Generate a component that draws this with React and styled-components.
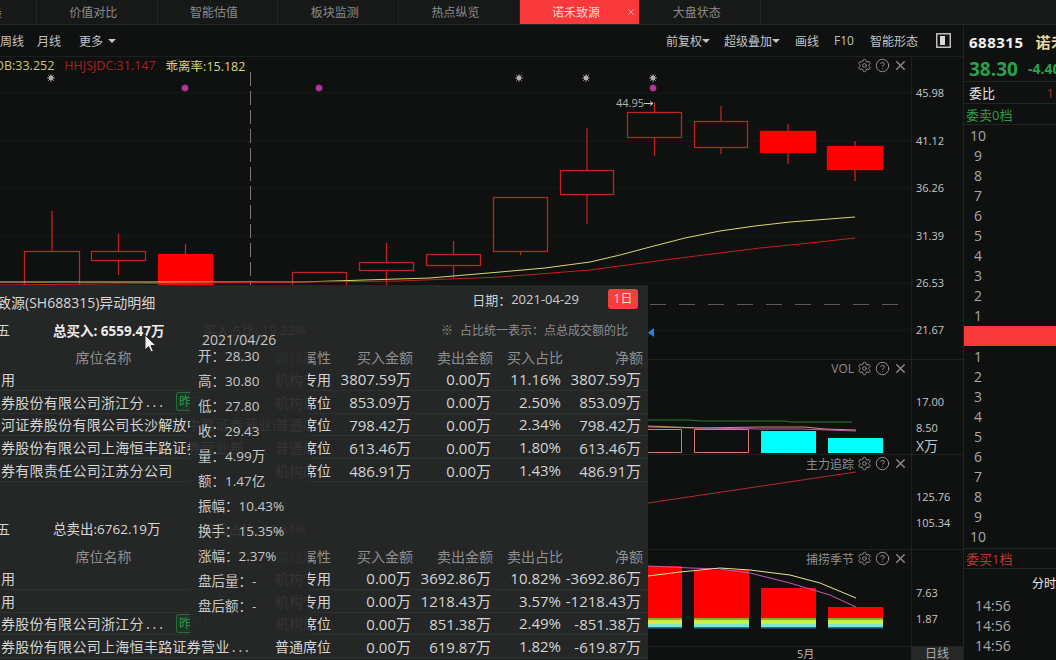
import React from 'react';
import styled, { createGlobalStyle } from 'styled-components';
import { Settings, CircleHelp, X } from 'lucide-react';

const GlobalStyle = createGlobalStyle`
  html, body { margin: 0; padding: 0; background: #0f1010; overflow: hidden; }
  body { font-family: "Open Sans", "Noto Sans CJK SC", sans-serif; }
`;

const Page = styled.div`
  position: relative;
  width: 1056px;
  height: 660px;
  overflow: hidden;
  background: #0f1010;
  display: flex;
  flex-direction: column;
  color: #bdbdbd;
`;

const TabBar = styled.div`
  height: 24px;
  flex: none;
  display: flex;
  background: #171818;
  border-bottom: 1px solid #232525;
`;

const Tab = styled.div`
  flex: none;
  width: ${p => p.$width || 120.7}px;
  box-sizing: border-box;
  display: flex;
  align-items: center;
  justify-content: ${p => (p.$edge ? 'flex-end' : 'center')};
  padding-right: ${p => (p.$edge ? 34 : 7)}px;
  position: relative;
  font-size: 12px;
  color: ${p => (p.$active ? '#f5d6d0' : '#8b8b8b')};
  background: ${p => (p.$active ? '#f7393b' : 'transparent')};
  border-right: 1px solid #232525;
  white-space: nowrap;
`;

const TabClose = styled(X)`
  position: absolute;
  right: 3px;
  top: 7px;
  width: 10px;
  height: 10px;
  color: #f5c0bb;
`;

const Body = styled.div`
  flex: 1;
  display: flex;
  min-height: 0;
`;

const Main = styled.div`
  width: 963px;
  flex: none;
  display: flex;
  flex-direction: column;
`;

const Toolbar = styled.div`
  height: 31px;
  flex: none;
  display: flex;
  align-items: center;
  justify-content: space-between;
  padding-right: 12px;
  border-bottom: 1px solid #1d1f1f;
  font-size: 12px;
`;

const ToolGroup = styled.div`
  display: flex;
  align-items: center;
`;

const ToolItem = styled.span`
  display: inline-flex;
  align-items: center;
  margin-left: ${p => p.$gap || 0}px;
  color: #c4c4c4;
  white-space: nowrap;
`;

const Caret = styled.i`
  display: inline-block;
  margin-left: ${p => p.$gap || 0}px;
  border-left: 4px solid transparent;
  border-right: 4px solid transparent;
  border-top: 4px solid #c4c4c4;
`;

const Charts = styled.div`
  flex: 1;
  display: grid;
  grid-template-rows: 303px 95px 95px 97px 13px;
`;

const Pane = styled.div`
  display: flex;
  border-bottom: 1px solid #1f2121;
  min-height: 0;
`;

const Plot = styled.div`
  position: relative;
  width: 911px;
  flex: none;
  overflow: hidden;
  svg.chart { display: block; }
`;

const Axis = styled.div`
  position: relative;
  flex: 1;
  border-left: 1px solid #1f2121;
  overflow: hidden;
`;

const AxisLabel = styled.span`
  position: absolute;
  left: 4px;
  top: ${p => p.$top}px;
  font-size: ${p => p.$size || 11}px;
  line-height: 14px;
  color: #c6c6c6;
  white-space: nowrap;
`;

const Legend = styled.div`
  position: absolute;
  left: -17px;
  top: 0;
  height: 17px;
  display: flex;
  align-items: center;
  font-size: 12.5px;
  white-space: nowrap;
`;

const LegendItem = styled.span`
  color: ${p => p.$color};
  margin-right: 10px;
`;

const PaneTools = styled.div`
  position: absolute;
  right: 3px;
  top: ${p => p.$top || 1}px;
  height: 15px;
  display: flex;
  align-items: center;
  gap: 3px;
  font-size: 12px;
  color: #8e8e8e;
  white-space: nowrap;
  svg { width: 15px; height: 15px; color: #8e8e8e; }
`;

const PaneName = styled.span`
  margin-right: 0;
`;

const TimeAxis = styled.div`
  display: flex;
`;

const TimeScale = styled.div`
  width: 911px;
  flex: none;
  font-size: 11px;
  line-height: 13px;
  padding-left: 797px;
  box-sizing: border-box;
  color: #bbb;
  overflow: hidden;
`;

const PeriodTag = styled.div`
  flex: 1;
  background: #262727;
  color: #aaa;
  font-size: 12px;
  line-height: 13px;
  text-align: center;
  overflow: hidden;
`;

const Side = styled.div`
  flex: 1;
  display: flex;
  flex-direction: column;
  border-left: 1px solid #222424;
  overflow: hidden;
  white-space: nowrap;
`;

const SideQuote = styled.div`
  height: 57px;
  flex: none;
  padding-left: 5px;
  border-bottom: 1px solid #242626;
  box-sizing: border-box;
`;

const Code = styled.div`
  height: 33px;
  display: flex;
  align-items: center;
  font-size: 15px;
  font-weight: 700;
  color: #f1f1f1;
  letter-spacing: .5px;
  span { color: #e8d89a; margin-left: 12px; }
`;

const Price = styled.div`
  display: flex;
  align-items: center;
  height: 21px;
  font-size: 19px;
  font-weight: 700;
  color: #2aa04b;
  span { font-size: 14px; margin-left: 10px; }
`;

const RatioRow = styled.div`
  height: 21px;
  flex: none;
  padding: 0 0 0 5px;
  display: flex;
  align-items: center;
  justify-content: space-between;
  border-bottom: 1px solid #242626;
  font-size: 13px;
  color: #e6e6e6;
  span { color: #9d3030; margin-right: 2px; }
`;

const LevelTitle = styled.div`
  height: 21px;
  flex: none;
  box-sizing: border-box;
  padding-left: 2px;
  display: flex;
  align-items: center;
  font-size: 13px;
  color: ${p => p.$color};
  border-bottom: 1px solid #242626;
  border-top: ${p => (p.$top ? '1px solid #242626' : '0')};
`;

const Ladder = styled.div`
  flex: none;
  padding-top: 1px;
  padding-bottom: ${p => p.$bottom || 0}px;
`;

const LadderRow = styled.div`
  height: 20px;
  line-height: 20px;
  width: 28px;
  text-align: center;
  font-size: 14px;
  color: #a8a8a8;
`;

const MidBar = styled.div`
  height: 20px;
  flex: none;
  background: #f7393b;
`;

const MinuteTitle = styled.div`
  height: 27px;
  flex: none;
  line-height: 30px;
  padding-left: 68px;
  font-size: 12px;
  color: #e6e6e6;
`;

const MinuteRow = styled.div`
  height: 20px;
  flex: none;
  line-height: 20px;
  padding-left: 11px;
  font-size: 14px;
  color: #a8a8a8;
`;

const Popup = styled.div`
  position: absolute;
  left: -42px;
  top: 285px;
  width: 690px;
  height: 375px;
  box-sizing: border-box;
  background: #252626;
  overflow: hidden;
  white-space: nowrap;
`;

const PopupHead = styled.div`
  height: 34px;
  display: flex;
  align-items: center;
  padding: 0 10px 0 11px;
  color: #d6d6d6;
`;

const PopupTitle = styled.div`
  flex: 1;
  font-size: 14px;
`;

const DateLabel = styled.span`
  margin-top: -6px;
  font-size: 13px;
  color: #cfcfcf;
`;

const DayButton = styled.span`
  margin-left: 29px;
  margin-top: -6px;
  width: 30px;
  height: 20px;
  line-height: 20px;
  text-align: center;
  border-radius: 3px;
  background: #f0403f;
  color: #f7d5d0;
  font-size: 12px;
`;

const Summary = styled.div`
  height: 21px;
  margin-top: ${p => p.$top || 0}px;
  display: flex;
  align-items: center;
  font-size: 13.5px;
  color: #d8d8d8;
`;

const SummaryLabel = styled.span`
  width: 95px;
  flex: none;
  font-size: 13px;
`;

const SummaryTotal = styled.span`
  width: 150px;
  flex: none;
  font-weight: ${p => (p.$bold ? 700 : 400)};
  color: ${p => (p.$bold ? '#ececec' : '#d8d8d8')};
`;

const SummaryRate = styled.span`
  color: #d8d8d8;
  flex: 1;
  font-size: 13px;
`;

const Note = styled.span`
  font-size: 12px;
  color: #8d8d8d;
  margin-right: 20px;
  i { font-style: normal; margin-right: 7px; }
`;

const Grid = styled.div`
  display: grid;
  grid-template-columns: 317px 58px 80px 80px 70px 80px;
  padding-right: 5px;
  align-items: center;
  height: ${p => (p.$head ? 22 : 22.8)}px;
  margin-top: ${p => (p.$head ? 6 : 0)}px;
  box-sizing: border-box;
  border-bottom: ${p => (p.$head ? '0' : '1px solid #2f3030')};
  font-size: 14px;
  letter-spacing: ${p => (p.$head ? 0 : 0.3)}px;
  color: ${p => (p.$head ? '#8f8f8f' : '#d4d4d4')};
`;

const NameCell = styled.div`
  display: flex;
  align-items: center;
  justify-content: ${p => (p.$center ? 'center' : 'flex-start')};
  padding-right: ${p => (p.$center ? 26 : 0)}px;
  overflow: hidden;
`;

const Dots = styled.span`
  letter-spacing: 3px;
  margin-left: 2px;
`;

const Badge = styled.span`
  flex: none;
  margin-left: 10px;
  width: 30px;
  height: 19px;
  line-height: 18px;
  box-sizing: border-box;
  border: 1px solid #2b6a3a;
  border-radius: 2px;
  padding-left: 2px;
  font-size: 12px;
  color: #2f9b4d;
  background: #1f3526;
`;

const TypeCell = styled.div`
  letter-spacing: 0;
`;

const NumCell = styled.div`
  text-align: right;
  padding-right: ${p => (p.$head ? 0 : 2)}px;
  font-size: ${p => (p.$head ? 14 : 15)}px;
  letter-spacing: 0;
`;

const KTip = styled.div`
  position: absolute;
  left: 232px;
  top: 33px;
  width: 118px;
  height: 319px;
  box-sizing: border-box;
  padding: 15px 0 0 8px;
  background: rgba(37, 38, 38, .92);
  font-size: 14px;
  color: #c8c8c8;
`;

const KTipDate = styled.div`
  height: 14px;
  line-height: 14px;
  margin-bottom: -3px;
  padding-left: 4px;
  font-size: 14px;
`;

const KTipRow = styled.div`
  height: 25px;
  line-height: 25px;
  font-size: 13.5px;
  b { font-weight: 400; }
`;

const Cursor = styled.svg`
  position: absolute;
  left: 144px;
  top: 334px;
  width: 14px;
  height: 20px;
`;

const Star = ({ x, y, color, r = 2.4 }) => (
  <g stroke={color} fill={color} strokeWidth="1">
    <circle cx={x} cy={y} r={r} stroke="none" />
    <path d={`M${x - 4} ${y}H${x + 4}M${x} ${y - 4}V${y + 4}M${x - 3} ${y - 3}L${x + 3} ${y + 3}M${x - 3} ${y + 3}L${x + 3} ${y - 3}`} strokeWidth=".7" />
  </g>
);

const PaneIcons = () => (
  <>
    <Settings strokeWidth={1.6} />
    <CircleHelp strokeWidth={1.6} />
    <X strokeWidth={2.2} />
  </>
);

// x, width, top, bottom, wick top, wick bottom, filled
const candles = [
  [24, 56, 251, 285, 211, 285, false],
  [91, 55, 251, 260, 234, 275, false],
  [158, 55, 254, 285, 244, 285, true],
  [292, 55, 272, 290, 272, 290, false],
  [359, 55, 262, 270, 243, 285, false],
  [426, 55, 254, 265, 241, 278, false],
  [493, 55, 197, 251, 197, 255, false],
  [560, 54, 170, 194, 128, 224, false],
  [627, 55, 112, 137, 102, 156, false],
  [694, 54, 121, 147, 106, 154, false],
  [760, 56, 131, 152, 124, 164, true],
  [827, 56, 146, 169, 141, 181, true],
];

const hollow = '#c02222';

const MainChart = () => (
  <svg className="chart" width="911" height="302" viewBox="0 57 911 302">
    {[93, 141, 188, 236, 283, 330].map(y => (
      <line key={y} x1="0" x2="911" y1={y} y2={y} stroke="#191b1b" />
    ))}
    <line x1="250.5" x2="250.5" y1="72" y2="285" stroke="#777" strokeDasharray="14 5" />
    {candles.map(([x, w, top, bottom, wt, wb, filled]) => (
      <g key={x}>
        <line x1={x + w / 2} x2={x + w / 2} y1={wt} y2={wb} stroke={filled ? '#d02020' : hollow} strokeWidth="1.3" />
        <rect x={x + 0.5} y={top + 0.5} width={w - 1} height={bottom - top} fill={filled ? '#ff0000' : '#0f1010'} stroke={filled ? '#ff0000' : hollow} strokeWidth="1.3" />
      </g>
    ))}
    <polyline fill="none" stroke="#d8d86a" points="0,282 300,282 430,278 500,272 545,268 590,262 620,255 650,247 685,238 720,231 755,226 790,222 855,217" />
    <polyline fill="none" stroke="#c42020" points="0,285 400,281 500,277 590,270 635,264 680,258 720,253 760,248 810,243 855,238" />
    {[51, 519, 586, 653].map(x => <Star key={x} x={x} y={78} color="#b0b0b0" />)}
    {[185, 319, 653].map(x => <Star key={x} x={x} y={88} color="#b83a9e" r={3} />)}
    <text x="616" y="107" fontSize="11" fill="#b5b5b5">44.95</text>
    <path d="M644 103.5H653M650 101.5L653 103.5L650 105.5" stroke="#c8c8c8" fill="none" />
    <line x1="650" x2="905" y1="304.5" y2="304.5" stroke="#5a5a5a" strokeDasharray="16 13" />
    <path d="M654 328V337L648 332.5Z" fill="#2f7fe0" />
  </svg>
);

const VolChart = () => (
  <svg className="chart" width="911" height="94" viewBox="0 360 911 94">
    <polyline fill="none" stroke="#2e7d32" points="648,420 690,420 700,421 785,421 790,422 852,422" />
    <polyline fill="none" stroke="#c35aa8" points="648,427 700,428 760,429 800,429 856,431" />
    <polyline fill="none" stroke="#d08a72" points="648,426 700,428 760,427 805,427 825,429 856,430" />
    <path d="M648 429.5H681.5V452.5H648M694.5 429.5H748.5V452.5H694.5Z" fill="none" stroke="#cf7c6c" />
    <rect x="761" y="431" width="55" height="22" fill="#00ffff" />
    <rect x="828" y="438" width="55" height="15" fill="#00ffff" />
  </svg>
);

const TraceChart = () => (
  <svg className="chart" width="911" height="94" viewBox="0 455 911 94">
    <line x1="648" y1="503" x2="856" y2="472" stroke="#b52a2a" />
  </svg>
);

const seasonBars = [
  [648, 34, 566],
  [694, 55, 570],
  [761, 55, 588],
  [828, 55, 607],
];

const SeasonChart = () => (
  <svg className="chart" width="911" height="96" viewBox="0 550 911 96">
    {seasonBars.map(([x, w, top]) => (
      <g key={x}>
        <rect x={x} y={top} width={w} height={618 - top} fill="#ff0000" />
        <rect x={x} y="618" width={w} height="2" fill="#8fae1e" />
        <rect x={x} y="620" width={w} height="4" fill="#c8f04a" />
        <rect x={x} y="624" width={w} height="3" fill="#7fe6c8" />
        <rect x={x} y="627" width={w} height="1.5" fill="#1e6f9c" />
      </g>
    ))}
    <polyline fill="none" stroke="#c65ab0" points="648,566 690,568 720,569 750,573 790,583 830,595 856,607" />
    <polyline fill="none" stroke="#e6e68a" points="648,576 680,572 720,568 750,570 790,575 820,583 856,598" />
  </svg>
);

const buyRows = [
  { name: '机构专用', type: '机构专用', cells: ['3807.59万', '0.00万', '11.16%', '3807.59万'] },
  { name: '中信证券股份有限公司浙江分', cut: true, badge: true, type: '机构席位', cells: ['853.09万', '0.00万', '2.50%', '853.09万'] },
  { name: '中国银河证券股份有限公司长沙解放中路证券营业部', type: '普通席位', cells: ['798.42万', '0.00万', '2.34%', '798.42万'] },
  { name: '中信证券股份有限公司上海恒丰路证券营业部', type: '普通席位', cells: ['613.46万', '0.00万', '1.80%', '613.46万'] },
  { name: '华泰证券有限责任公司江苏分公司', type: '机构席位', cells: ['486.91万', '0.00万', '1.43%', '486.91万'] },
];

const sellRows = [
  { name: '机构专用', type: '机构专用', cells: ['0.00万', '3692.86万', '10.82%', '-3692.86万'] },
  { name: '机构专用', type: '机构专用', cells: ['0.00万', '1218.43万', '3.57%', '-1218.43万'] },
  { name: '中信证券股份有限公司浙江分', cut: true, badge: true, type: '机构席位', cells: ['0.00万', '851.38万', '2.49%', '-851.38万'] },
  { name: '中信证券股份有限公司上海恒丰路证券营业', cut: true, type: '普通席位', cells: ['0.00万', '619.87万', '1.82%', '-619.87万'] },
];

const tipRows = [
  ['开：', '28.30'], ['高：', '30.80'], ['低：', '27.80'], ['收：', '29.43'],
  ['量：', '4.99万'], ['额：', '1.47亿'], ['振幅：', '10.43%'], ['换手：', '15.35%'],
  ['涨幅：', '2.37%'], ['盘后量：', '-'], ['盘后额：', '-'],
];

const TradeTable = ({ rows, rateTitle }) => (
  <>
    <Grid $head>
      <NameCell $center>席位名称</NameCell>
      <TypeCell>席位属性</TypeCell>
      <NumCell $head>买入金额</NumCell>
      <NumCell $head>卖出金额</NumCell>
      <NumCell $head>{rateTitle}</NumCell>
      <NumCell $head>净额</NumCell>
    </Grid>
    {rows.map((r, i) => (
      <Grid key={i}>
        <NameCell>
          {r.name}
          {r.cut && <Dots>...</Dots>}
          {r.badge && <Badge>昨日</Badge>}
        </NameCell>
        <TypeCell>{r.type}</TypeCell>
        {r.cells.map((c, j) => <NumCell key={j}>{c}</NumCell>)}
      </Grid>
    ))}
  </>
);

const sellLevels = [10, 9, 8, 7, 6, 5, 4, 3, 2, 1];
const buyLevels = [1, 2, 3, 4, 5, 6, 7, 8, 9, 10];
const tabs = ['价值对比', '智能估值', '板块监测', '热点纵览'];

const App = () => (
  <Page>
    <GlobalStyle />
    <TabBar>
      <Tab $width={37} $edge>最</Tab>
      {tabs.map(t => <Tab key={t}>{t}</Tab>)}
      <Tab $active>诺禾致源<TabClose strokeWidth={2} /></Tab>
      <Tab>大盘状态</Tab>
    </TabBar>
    <Body>
      <Main>
        <Toolbar>
          <ToolGroup>
            <ToolItem>周线</ToolItem>
            <ToolItem $gap={13}>月线</ToolItem>
            <ToolItem $gap={18}>更多<Caret $gap={5} /></ToolItem>
          </ToolGroup>
          <ToolGroup>
            <ToolItem>前复权<Caret /></ToolItem>
            <ToolItem $gap={14}>超级叠加<Caret /></ToolItem>
            <ToolItem $gap={15}>画线</ToolItem>
            <ToolItem $gap={15}>F10</ToolItem>
            <ToolItem $gap={16}>智能形态</ToolItem>
            <ToolItem $gap={18}>
              <svg width="15" height="15" viewBox="0 0 15 15">
                <rect x=".75" y=".75" width="13.5" height="13.5" fill="none" stroke="#bdbdbd" strokeWidth="1.5" />
                <rect x="4" y="3" width="5" height="9" fill="#d8d8d8" />
              </svg>
            </ToolItem>
          </ToolGroup>
        </Toolbar>
        <Charts>
          <Pane>
            <Plot>
              <MainChart />
              <Legend>
                <LegendItem $color="#c9c97a">MOB:33.252</LegendItem>
                <LegendItem $color="#a52222">HHJSJDC:31.147</LegendItem>
                <LegendItem $color="#d8d880">乖离率:15.182</LegendItem>
              </Legend>
              <PaneTools><PaneIcons /></PaneTools>
            </Plot>
            <Axis>
              {[['45.98', 29], ['41.12', 77], ['36.26', 124], ['31.39', 172], ['26.53', 219], ['21.67', 266]].map(([v, t]) => (
                <AxisLabel key={v} $top={t}>{v}</AxisLabel>
              ))}
            </Axis>
          </Pane>
          <Pane>
            <Plot>
              <VolChart />
              <PaneTools><PaneName>VOL</PaneName><PaneIcons /></PaneTools>
            </Plot>
            <Axis>
              <AxisLabel $top={35}>17.00</AxisLabel>
              <AxisLabel $top={61}>8.50</AxisLabel>
              <AxisLabel $top={79} $size={14}>X万</AxisLabel>
            </Axis>
          </Pane>
          <Pane>
            <Plot>
              <TraceChart />
              <PaneTools><PaneName>主力追踪</PaneName><PaneIcons /></PaneTools>
            </Plot>
            <Axis>
              <AxisLabel $top={35}>125.76</AxisLabel>
              <AxisLabel $top={61}>105.34</AxisLabel>
            </Axis>
          </Pane>
          <Pane>
            <Plot>
              <SeasonChart />
              <PaneTools><PaneName>捕捞季节</PaneName><PaneIcons /></PaneTools>
            </Plot>
            <Axis>
              <AxisLabel $top={36}>7.63</AxisLabel>
              <AxisLabel $top={62}>1.87</AxisLabel>
            </Axis>
          </Pane>
          <TimeAxis>
            <TimeScale>5月</TimeScale>
            <PeriodTag>日线</PeriodTag>
          </TimeAxis>
        </Charts>
      </Main>
      <Side>
        <SideQuote>
          <Code>688315<span>诺禾致源</span></Code>
          <Price>38.30<span>-4.40</span></Price>
        </SideQuote>
        <RatioRow>委比<span>1</span></RatioRow>
        <LevelTitle $color="#2f9b4d">委卖0档</LevelTitle>
        <Ladder>
          {sellLevels.map(n => <LadderRow key={n}>{n}</LadderRow>)}
        </Ladder>
        <MidBar />
        <Ladder $bottom={1}>
          {buyLevels.map(n => <LadderRow key={n}>{n}</LadderRow>)}
        </Ladder>
        <LevelTitle $color="#b8383a" $top>委买1档</LevelTitle>
        <MinuteTitle>分时</MinuteTitle>
        <MinuteRow>14:56</MinuteRow>
        <MinuteRow>14:56</MinuteRow>
        <MinuteRow>14:56</MinuteRow>
        <MinuteRow>14:56</MinuteRow>
      </Side>
    </Body>
    <Popup>
      <PopupHead>
        <PopupTitle>诺禾致源(SH688315)异动明细</PopupTitle>
        <DateLabel>日期：</DateLabel>
        <DateLabel>2021-04-29</DateLabel>
        <DayButton>1日</DayButton>
      </PopupHead>
      <Summary>
        <SummaryLabel>买入前五</SummaryLabel>
        <SummaryTotal $bold>总买入: 6559.47万</SummaryTotal>
        <SummaryRate>买入占比: 19.22%</SummaryRate>
        <Note><i>※</i>占比统一表示：点总成交额的比</Note>
      </Summary>
      <TradeTable rows={buyRows} rateTitle="买入占比" />
      <Summary $top={36}>
        <SummaryLabel>卖出前五</SummaryLabel>
        <SummaryTotal>总卖出:6762.19万</SummaryTotal>
        <SummaryRate>卖出占比: 19.81%</SummaryRate>
      </Summary>
      <TradeTable rows={sellRows} rateTitle="卖出占比" />
      <KTip>
        <KTipDate>2021/04/26</KTipDate>
        {tipRows.map(([k, v]) => <KTipRow key={k}><b>{k}</b>{v}</KTipRow>)}
      </KTip>
    </Popup>
    <Cursor viewBox="0 0 14 20">
      <path d="M1 1V16L4.6 12.6L7 18L9.4 17L7 11.6H12Z" fill="#f2f2f2" stroke="#222" strokeWidth="1" />
    </Cursor>
  </Page>
);

export default App;
